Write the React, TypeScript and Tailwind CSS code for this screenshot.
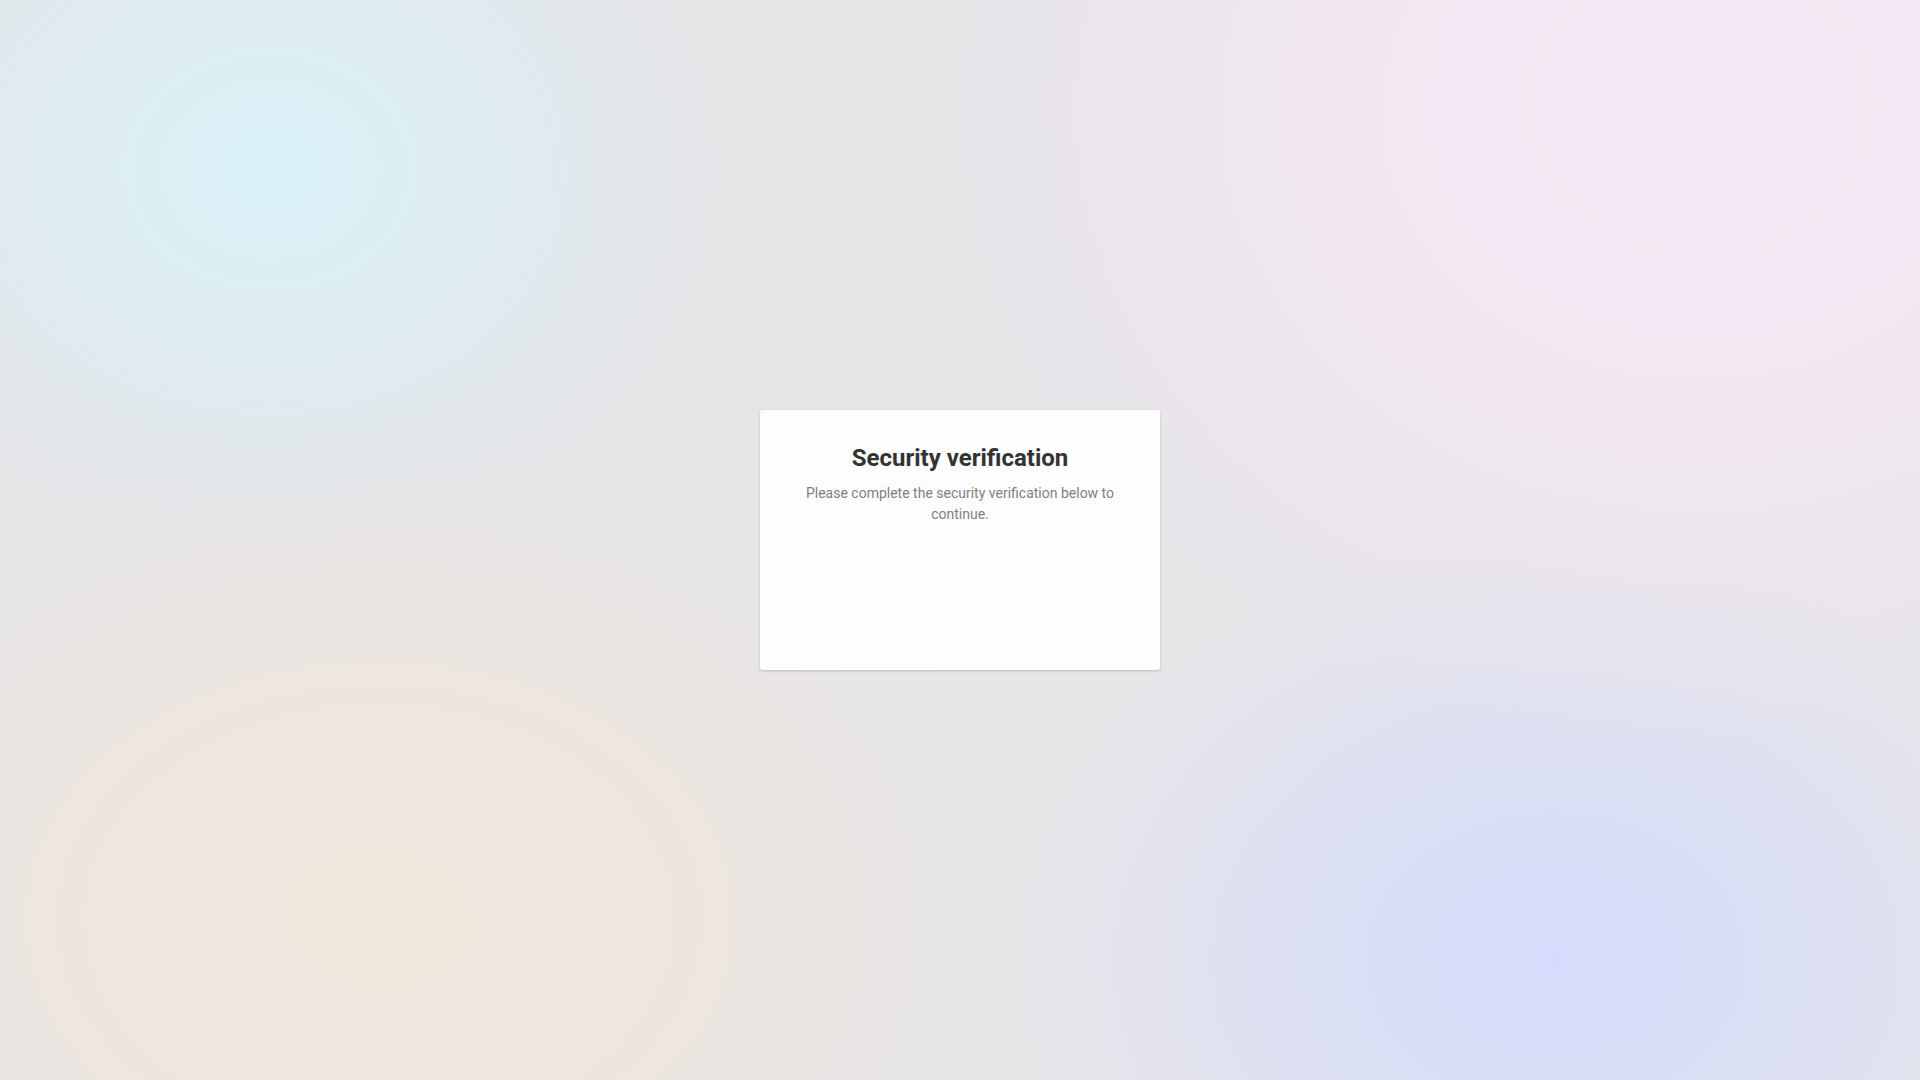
import React from "react";

export default function App() {
  return (
    <div
      className="w-[1920px] h-[1080px] flex items-center justify-center bg-[#e6e5e8] bg-[radial-gradient(ellipse_460px_380px_at_270px_170px,#d9f1f8_0%,rgba(217,241,248,0.6)_45%,rgba(217,241,248,0)_100%),radial-gradient(ellipse_760px_640px_at_1700px_110px,#f6e8f5_0%,rgba(246,232,245,0.65)_50%,rgba(246,232,245,0)_100%),radial-gradient(ellipse_540px_420px_at_1555px_960px,#d5dcfb_0%,rgba(213,220,251,0.6)_45%,rgba(213,220,251,0)_100%),radial-gradient(ellipse_660px_480px_at_380px_920px,#f2e7dc_0%,rgba(242,231,220,0.6)_50%,rgba(242,231,220,0)_100%)]"
      style={{ fontFamily: "Roboto, 'Liberation Sans', sans-serif" }}
    >
      <div className="w-[400px] h-[260px] bg-[#fdfdfd] rounded-[3px] shadow-[0_1px_3px_rgba(0,0,0,0.18)] px-10 pt-8 flex flex-col items-center text-center">
        <h1 className="text-[24px] leading-8 font-bold text-[#333333]">Security verification</h1>
        <p className="mt-[9px] text-[14px] leading-[21px] text-[#808080]">
          Please complete the security verification below to continue.
        </p>
      </div>
    </div>
  );
}
